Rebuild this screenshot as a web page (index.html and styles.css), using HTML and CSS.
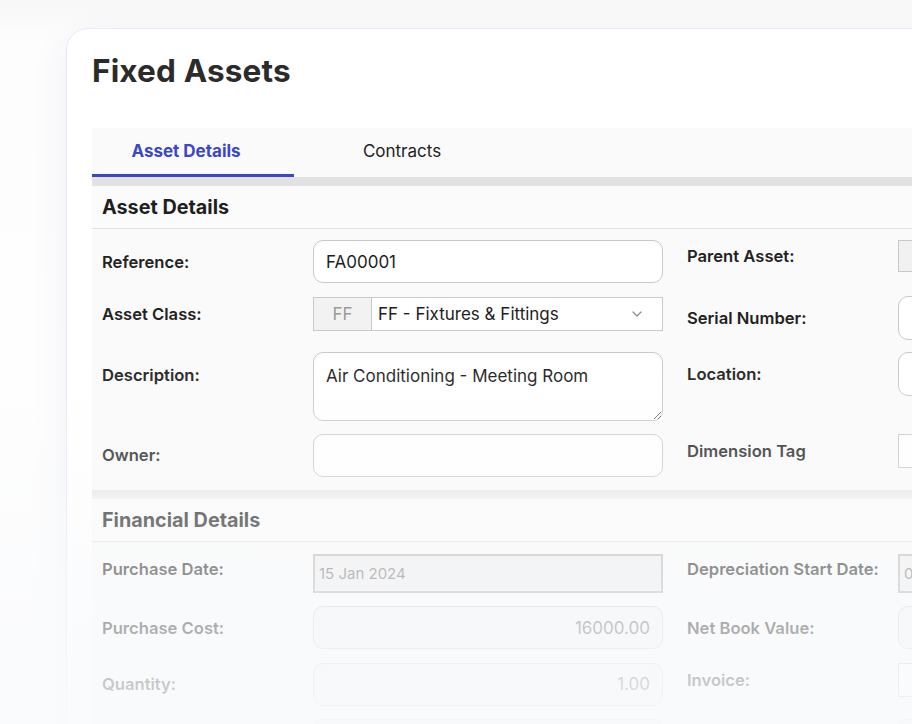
FILE: index.html
```html
<!DOCTYPE html>
<html lang="en">
<head>
<meta charset="utf-8">
<title>Fixed Assets</title>
<link rel="stylesheet" href="styles.css">
</head>
<body>
<div class="stage">
  <div class="card">
    <h1 class="title">Fixed Assets</h1>
    <div class="panel">
      <nav class="tabs">
        <div class="tab tab-first active">Asset Details</div>
        <div class="tab tab-second">Contracts</div>
      </nav>
      <div class="tabs-rule"></div>

      <section class="section">
        <h2 class="section-head">Asset Details</h2>
        <div class="form-grid">
          <label class="lbl h43">Reference:</label>
          <input class="ctl rounded h43" value="FA00001">
          <label class="lbl lbl-right h32">Parent Asset:</label>
          <input class="ctl square shaded h32" value="">

          <label class="lbl h34 nudge">Asset Class:</label>
          <div class="combo h34 nudge">
            <span class="combo-code">FF</span>
            <span class="combo-value">FF - Fixtures &amp; Fittings</span>
            <svg class="chev" width="10" height="6" viewBox="0 0 10 6"><path d="M1 1l4 4 4-4" fill="none" stroke="#8a8a8a" stroke-width="1.2" stroke-linecap="round" stroke-linejoin="round"/></svg>
          </div>
          <label class="lbl lbl-right h44">Serial Number:</label>
          <input class="ctl rounded h44" value="">

          <label class="lbl lbl-top h69">Description:</label>
          <textarea class="ctl rounded area h69">Air Conditioning - Meeting Room</textarea>
          <label class="lbl lbl-right h44">Location:</label>
          <input class="ctl rounded h44" value="">

          <label class="lbl h43">Owner:</label>
          <input class="ctl rounded h43" value="">
          <label class="lbl lbl-right h34">Dimension Tag</label>
          <input class="ctl square h34" value="">
        </div>
      </section>

      <div class="section-rule"></div>

      <section class="section">
        <h2 class="section-head">Financial Details</h2>
        <div class="form-grid fin-grid">
          <label class="lbl lbl-raised h39">Purchase Date:</label>
          <input class="ctl square date h39" value="15 Jan 2024">
          <label class="lbl lbl-right lbl-raised h39">Depreciation Start Date:</label>
          <input class="ctl square date h39" value="01 Feb 2024">

          <label class="lbl h43">Purchase Cost:</label>
          <input class="ctl rounded muted num h43" value="16000.00">
          <label class="lbl lbl-right h43">Net Book Value:</label>
          <input class="ctl rounded muted h43" value="">

          <label class="lbl h43">Quantity:</label>
          <input class="ctl rounded muted num h43" value="1.00">
          <label class="lbl lbl-right h34">Invoice:</label>
          <input class="ctl square h34" value="">

          <span class="lbl h43"></span>
          <input class="ctl rounded muted h43" value="">
          <span class="lbl lbl-right h43"></span>
          <input class="ctl rounded muted h43" value="">
        </div>
      </section>
    </div>
  </div>
  <div class="fade"></div>
</div>
</body>
</html>
```

FILE: styles.css
```css
* { box-sizing: border-box; }

html, body {
  margin: 0;
  padding: 0;
  background: #ffffff;
  overflow: hidden;
}

body {
  font-family: Inter, "Noto Sans", "Liberation Sans", sans-serif;
  color: #222222;
}

.stage {
  position: relative;
  width: 912px;
  height: 724px;
  overflow: hidden;
  padding: 28px 0 0 66px;
  background: linear-gradient(180deg, #f7f7f8 0px, #fdfdfe 40px, #ffffff 100%);
}

.card {
  width: 1000px;
  height: 900px;
  background: #ffffff;
  border: 1px solid #e4ecf8;
  border-radius: 22px;
  box-shadow: 0 12px 40px rgba(40, 50, 90, 0.07);
  padding: 24px 0 0 25px;
}

.title {
  margin: 0 0 39px 0;
  font-size: 31.5px;
  line-height: 36px;
  font-weight: 700;
  color: #2b2b2b;
  letter-spacing: 0.15px;
}

.panel {
  background: #fafafa;
}

.tabs {
  display: flex;
  height: 49px;
  background: #fafafa;
}

.tab {
  display: flex;
  align-items: center;
  justify-content: center;
  font-size: 17px;
  color: #222222;
  border-bottom: 3px solid transparent;
}

.tab-first { width: 202px; padding-right: 14px; }
.tab-second { width: 216px; }

.tab.active {
  color: #3b47c9;
  font-weight: 700;
  border-bottom-color: #3b47c9;
}

.tabs-rule {
  height: 9px;
  background: #e2e2e2;
}

.section-head {
  margin: 0;
  height: 43px;
  padding-left: 10px;
  display: flex;
  align-items: center;
  font-size: 19.8px;
  font-weight: 700;
  color: #1e1e1e;
  background: #fbfbfb;
  border-bottom: 1px solid #e2e2e2;
}

.form-grid {
  display: grid;
  grid-template-columns: 211px 350px 235px 250px;
  align-items: start;
  row-gap: 12.5px;
  padding: 11px 0 13px 10px;
}

.fin-grid {
  row-gap: 13.5px;
  padding-top: 12px;
}

.lbl {
  display: flex;
  align-items: center;
  font-size: 16.6px;
  font-weight: 600;
  color: #222222;
  white-space: nowrap;
}

.lbl-right { padding-left: 24px; }
.lbl-top { align-items: flex-start; padding-top: 13px; }
.lbl-raised { padding-bottom: 9px; }

.nudge { margin-top: 1px; }

.h32 { height: 32px; }
.h34 { height: 34px; }
.h39 { height: 39px; }
.h43 { height: 43px; }
.h44 { height: 44px; }
.h69 { height: 69px; }

.ctl {
  display: block;
  width: 100%;
  margin: 0;
  font-family: Inter, "Noto Sans", "Liberation Sans", sans-serif;
  font-size: 17px;
  color: #1e1e1e;
  background: #ffffff;
  border: 1px solid #c9c9c9;
  padding: 0 12px;
  outline: none;
}

.rounded { border-radius: 10px; }
.square { border-radius: 0; }
.shaded { background: #f1f1f1; }

.area {
  padding: 11px 12px;
  line-height: 24px;
  resize: vertical;
}

.combo {
  display: flex;
  align-items: center;
  border: 1px solid #c9c9c9;
  background: #ffffff;
}

.combo-code {
  width: 58px;
  height: 100%;
  display: flex;
  align-items: center;
  justify-content: center;
  background: #f2f2f2;
  border-right: 1px solid #c9c9c9;
  color: #9a9a9a;
  font-size: 17px;
}

.combo-value {
  flex: 1;
  padding-left: 6px;
  font-size: 17px;
  color: #1e1e1e;
}

.chev { margin-right: 20px; }

.date {
  background: #eeeeee;
  border: 2px solid #b9b9b9;
  font-size: 15px;
  color: #777777;
  padding: 0 4px;
}

.muted {
  background: #f4f4f4;
  border-color: #d4d4d4;
  color: #6a6a6a;
}

.num { text-align: right; }

.section-rule {
  height: 9px;
  background: linear-gradient(180deg, #e6e6e6, #efefef);
}

.fade {
  position: absolute;
  inset: 0;
  pointer-events: none;
  background: linear-gradient(180deg,
    rgba(249, 250, 252, 0) 0%,
    rgba(249, 250, 252, 0) 49%,
    rgba(249, 250, 252, 0.5) 78%,
    rgba(249, 250, 252, 0.86) 100%);
}
```
